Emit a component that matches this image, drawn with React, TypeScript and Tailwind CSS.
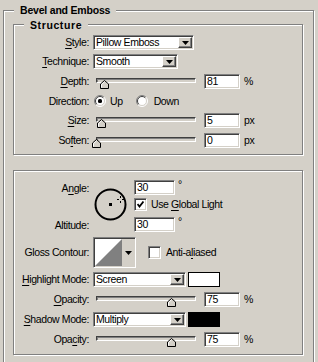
const sunken =
  'border border-t-[#808080] border-l-[#808080] border-b-white border-r-white shadow-[inset_1px_1px_0_#404040,inset_-1px_-1px_0_#d4d0c8]';
const raised =
  'border border-t-white border-l-white border-b-[#404040] border-r-[#404040] shadow-[inset_-1px_-1px_0_#808080]';
const etched =
  'relative border border-[#808080] shadow-[inset_1px_1px_0_#fff,1px_1px_0_#fff]';

function Label({ children }: { children: React.ReactNode }) {
  return <div className="w-[75px] shrink-0 text-right whitespace-nowrap">{children}</div>;
}

function U({ children }: { children: React.ReactNode }) {
  return <span className="underline underline-offset-[2px]">{children}</span>;
}

function DownArrow() {
  return (
    <svg width="7" height="4" viewBox="0 0 7 4">
      <polygon points="0,0 7,0 3.5,4" fill="#000" />
    </svg>
  );
}

function Select({ value, width }: { value: string; width: string }) {
  return (
    <div className={`flex h-[15px] ${width} bg-white p-[1px] ${sunken}`}>
      <span className="flex-1 pl-[1px] leading-[11px]">{value}</span>
      <div className={`flex w-[14px] items-center justify-center bg-[#d4d0c8] ${raised}`}>
        <DownArrow />
      </div>
    </div>
  );
}

function Field({ value, width = 'w-[36px]' }: { value: string; width?: string }) {
  return (
    <div className={`h-[15px] ${width} bg-white pl-[2px] leading-[13px] ${sunken}`}>{value}</div>
  );
}

function Slider({ pos }: { pos: number }) {
  return (
    <div className="relative ml-[7px] h-[15px] w-[100px] shrink-0">
      <div className="absolute left-0 right-0 top-[4px] h-[5px] border border-t-[#404040] border-l-[#404040] border-b-white border-r-white bg-[#d4d0c8] shadow-[inset_1px_1px_0_#808080]" />
      <svg
        className="absolute top-[6px]"
        style={{ left: pos - 4 }}
        width="9"
        height="9"
        viewBox="0 0 9 9"
      >
        <polygon points="0.5,8.5 0.5,4 4.5,0.5 8.5,4 8.5,8.5" fill="#d4d0c8" stroke="#000" />
        <polyline points="1.5,7.5 1.5,4.5 4.5,1.8" fill="none" stroke="#fff" />
      </svg>
    </div>
  );
}

function SliderRow({
  label,
  pos,
  value,
  unit,
  className = '',
}: {
  label: React.ReactNode;
  pos: number;
  value: string;
  unit: string;
  className?: string;
}) {
  return (
    <div className={`flex h-[15px] items-center ${className}`}>
      <Label>{label}</Label>
      <Slider pos={pos} />
      <div className="ml-[8px]">
        <Field value={value} />
      </div>
      <span className="ml-[4px]">{unit}</span>
    </div>
  );
}

function Radio({ checked }: { checked: boolean }) {
  return (
    <svg width="12" height="12" viewBox="0 0 12 12" className="shrink-0">
      <circle cx="6" cy="6" r="5" fill="#fff" />
      <path d="M2.1 9.9 A5.5 5.5 0 0 1 9.9 2.1" fill="none" stroke="#808080" />
      <path d="M9.9 2.1 A5.5 5.5 0 0 1 2.1 9.9" fill="none" stroke="#fff" />
      <path d="M2.8 9.2 A4.5 4.5 0 0 1 9.2 2.8" fill="none" stroke="#404040" />
      <path d="M9.2 2.8 A4.5 4.5 0 0 1 2.8 9.2" fill="none" stroke="#d4d0c8" />
      {checked && <rect x="4" y="4" width="4" height="4" rx="1.5" fill="#000" />}
    </svg>
  );
}

function Checkbox({ checked }: { checked: boolean }) {
  return (
    <div className={`flex h-[13px] w-[13px] shrink-0 items-center justify-center bg-white ${sunken}`}>
      {checked && (
        <svg width="7" height="7" viewBox="0 0 7 7">
          <polyline points="0.5,3 2.5,5.5 6.5,0.5" fill="none" stroke="#000" strokeWidth="1.8" />
        </svg>
      )}
    </div>
  );
}

function AngleWheel() {
  return (
    <svg width="33" height="33" viewBox="0 0 33 33" className="shrink-0">
      <circle cx="16.5" cy="16.5" r="15" fill="none" stroke="#000" strokeWidth="2" />
      <rect x="15" y="15" width="3" height="3" fill="#000" />
      <g stroke="#000" strokeWidth="1">
        <line x1="26.5" y1="8" x2="26.5" y2="10" />
        <line x1="26.5" y1="13" x2="26.5" y2="15" />
        <line x1="23" y1="11.5" x2="25" y2="11.5" />
        <line x1="28" y1="11.5" x2="30" y2="11.5" />
      </g>
    </svg>
  );
}

function GlossContour() {
  return (
    <div className={`flex h-[31px] w-[43px] bg-[#d4d0c8] p-[1px] ${sunken}`}>
      <svg width="27" height="27" viewBox="0 0 27 27" className="shrink-0">
        <rect width="27" height="27" fill="#fff" />
        <polygon points="0,27 27,0 27,27" fill="#808080" />
      </svg>
      <div className="flex flex-1 items-center justify-center">
        <DownArrow />
      </div>
    </div>
  );
}

export default function App() {
  return (
    <div
      className="h-[362px] w-[318px] overflow-hidden bg-[#d4d0c8] pt-[10px] text-[10.5px] leading-[13px] tracking-[-0.4px] text-black"
      style={{ fontFamily: '"Liberation Sans", Arial, sans-serif' }}
    >
      <div className={`ml-[3px] w-[311px] pb-[20px] pl-[9px] pr-[10px] pt-[13px] ${etched}`}>
        <div className="absolute left-[10px] top-[-7px] bg-[#d4d0c8] px-[6px] text-[10.5px] font-bold tracking-[-0.2px]">
          Bevel and Emboss
        </div>

        {/* Structure */}
        <div className={`w-[290px] pb-[6px] pt-[10px] ${etched}`}>
          <div className="absolute left-[10px] top-[-6px] bg-[#d4d0c8] px-[6px] font-bold tracking-[0.6px]">
            Structure
          </div>

          <div className="flex h-[15px] items-center">
            <Label>
              <U>S</U>tyle:
            </Label>
            <div className="ml-[4px]">
              <Select value="Pillow Emboss" width="w-[101px]" />
            </div>
          </div>

          <div className="mt-[4px] flex h-[15px] items-center">
            <Label>
              <U>T</U>echnique:
            </Label>
            <div className="ml-[4px]">
              <Select value="Smooth" width="w-[85px]" />
            </div>
          </div>

          <SliderRow
            className="mt-[5px]"
            label={
              <>
                <U>D</U>epth:
              </>
            }
            pos={8}
            value="81"
            unit="%"
          />

          <div className="mt-[4px] flex h-[16px] items-center">
            <Label>Direction:</Label>
            <div className="ml-[5px] flex items-center">
              <Radio checked />
              <span className="ml-[4px]">Up</span>
            </div>
            <div className="ml-[13px] flex items-center">
              <Radio checked={false} />
              <span className="ml-[6px]">Down</span>
            </div>
          </div>

          <SliderRow
            className="mt-[4px]"
            label={
              <>
                <U>S</U>ize:
              </>
            }
            pos={5}
            value="5"
            unit="px"
          />

          <SliderRow
            className="mt-[5px]"
            label={
              <>
                So<U>f</U>ten:
              </>
            }
            pos={0}
            value="0"
            unit="px"
          />
        </div>

        {/* Shading */}
        <div className={`mt-[15px] w-[290px] pb-[7px] pt-[9px] ${etched}`}>
          <div className="flex">
            <div className="flex w-[75px] shrink-0 flex-col text-right">
              <div className="mt-[2px]">
                A<U>n</U>gle:
              </div>
              <div className="mt-[24px]">Altitude:</div>
            </div>
            <div className="ml-[5px] mt-[8px]">
              <AngleWheel />
            </div>
            <div className="ml-[7px] flex flex-col">
              <div className="flex">
                <Field value="30" width="w-[41px]" />
                <span className="ml-[3px] leading-[9px]">°</span>
              </div>
              <div className="mt-[3px] flex items-center">
                <Checkbox checked />
                <span className="ml-[4px]">
                  Use <U>G</U>lobal Light
                </span>
              </div>
              <div className="mt-[6px] flex">
                <Field value="30" width="w-[41px]" />
                <span className="ml-[3px] leading-[9px]">°</span>
              </div>
            </div>
          </div>

          <div className="mt-[5px] flex items-center">
            <Label>Gloss Contour:</Label>
            <div className="ml-[4px]">
              <GlossContour />
            </div>
            <div className="ml-[12px]">
              <Checkbox checked={false} />
            </div>
            <span className="ml-[5px]">
              Anti-a<U>l</U>iased
            </span>
          </div>

          <div className="mt-[4px] flex h-[15px] items-center">
            <Label>
              <U>H</U>ighlight Mode:
            </Label>
            <div className="ml-[4px]">
              <Select value="Screen" width="w-[93px]" />
            </div>
            <div className="ml-[2px] h-[15px] w-[32px] border border-black bg-white" />
          </div>

          <SliderRow
            className="mt-[5px]"
            label={
              <>
                <U>O</U>pacity:
              </>
            }
            pos={75}
            value="75"
            unit="%"
          />

          <div className="mt-[5px] flex h-[15px] items-center">
            <Label>
              <U>S</U>hadow Mode:
            </Label>
            <div className="ml-[4px]">
              <Select value="Multiply" width="w-[93px]" />
            </div>
            <div className="ml-[2px] h-[15px] w-[32px] bg-black" />
          </div>

          <SliderRow
            className="mt-[5px]"
            label={
              <>
                Opa<U>c</U>ity:
              </>
            }
            pos={75}
            value="75"
            unit="%"
          />
        </div>
      </div>
    </div>
  );
}
